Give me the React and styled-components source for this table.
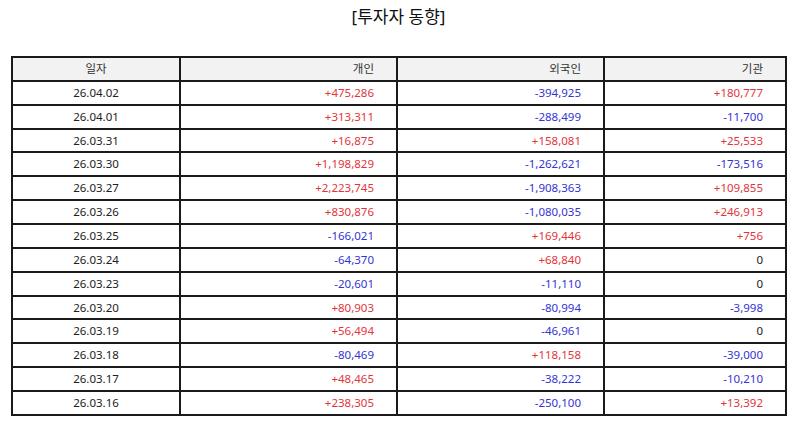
import React from "react";
import styled, { createGlobalStyle } from "styled-components";

const Global = createGlobalStyle`
  html, body { margin: 0; padding: 0; background: #fff; }
  body { font-family: "Noto Sans", "Noto Sans CJK KR", sans-serif; }
`;

const Page = styled.div`
  width: 794px;
  padding: 0 8px 0 11px;
  box-sizing: border-box;
`;

const Title = styled.h1`
  margin: 0;
  height: 56px;
  padding-top: 4px;
  box-sizing: border-box;
  text-align: center;
  font-size: 17px;
  font-weight: 400;
  line-height: 26px;
  color: #111;
`;

const Table = styled.table`
  width: 774px;
  border-collapse: collapse;
  table-layout: fixed;
  font-size: 11.5px;
  color: #333;
`;

const Th = styled.th`
  height: 21.87px;
  padding: 0 22px;
  border: 2px solid #1a1a1a;
  background: #f2f2f2;
  font-weight: 400;
  text-align: ${(p) => (p.$center ? "center" : "right")};
  line-height: 14px;
`;

const Td = styled.td`
  height: 21.87px;
  padding: 0 22px;
  border: 2px solid #1a1a1a;
  text-align: ${(p) => (p.$center ? "center" : "right")};
  line-height: 14px;
  color: ${(p) => (p.$tone === "up" ? "#e3343a" : p.$tone === "down" ? "#3434d4" : "#222")};
`;

const rows = [
  ["26.04.02", "+475,286", "-394,925", "+180,777"],
  ["26.04.01", "+313,311", "-288,499", "-11,700"],
  ["26.03.31", "+16,875", "+158,081", "+25,533"],
  ["26.03.30", "+1,198,829", "-1,262,621", "-173,516"],
  ["26.03.27", "+2,223,745", "-1,908,363", "+109,855"],
  ["26.03.26", "+830,876", "-1,080,035", "+246,913"],
  ["26.03.25", "-166,021", "+169,446", "+756"],
  ["26.03.24", "-64,370", "+68,840", "0"],
  ["26.03.23", "-20,601", "-11,110", "0"],
  ["26.03.20", "+80,903", "-80,994", "-3,998"],
  ["26.03.19", "+56,494", "-46,961", "0"],
  ["26.03.18", "-80,469", "+118,158", "-39,000"],
  ["26.03.17", "+48,465", "-38,222", "-10,210"],
  ["26.03.16", "+238,305", "-250,100", "+13,392"],
];

const tone = (v) => (v.startsWith("+") ? "up" : v.startsWith("-") ? "down" : "flat");

export default function App() {
  return (
    <>
      <Global />
      <Page>
        <Title>[투자자 동향]</Title>
        <Table>
          <colgroup>
            <col style={{ width: 168 }} />
            <col style={{ width: 217 }} />
            <col style={{ width: 207 }} />
            <col style={{ width: 182 }} />
          </colgroup>
          <thead>
            <tr>
              <Th $center>일자</Th>
              <Th>개인</Th>
              <Th>외국인</Th>
              <Th>기관</Th>
            </tr>
          </thead>
          <tbody>
            {rows.map((r) => (
              <tr key={r[0]}>
                <Td $center>{r[0]}</Td>
                <Td $tone={tone(r[1])}>{r[1]}</Td>
                <Td $tone={tone(r[2])}>{r[2]}</Td>
                <Td $tone={tone(r[3])}>{r[3]}</Td>
              </tr>
            ))}
          </tbody>
        </Table>
      </Page>
    </>
  );
}
